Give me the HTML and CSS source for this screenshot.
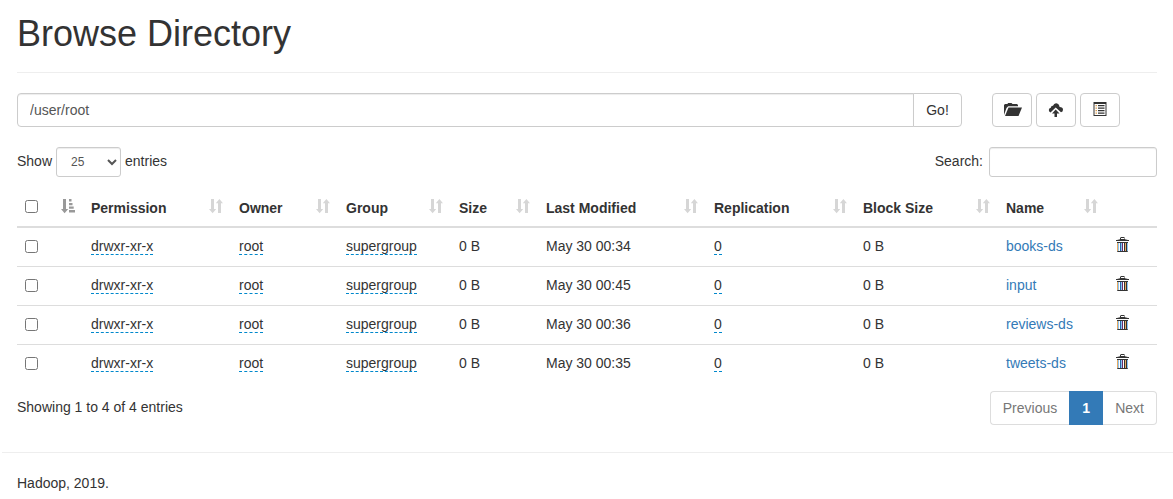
FILE: index.html
```html
<!DOCTYPE html>
<html lang="en">
<head>
<meta charset="utf-8">
<title>Browsing HDFS</title>
<link rel="stylesheet" href="styles.css">
</head>
<body>
<svg class="sprite" aria-hidden="true">
  <symbol id="sort" viewBox="0 0 14 15"><path d="M2 0h3v10h2.200l-3.600 4.300L0 10h2zM9 14V4.300H6.800L10.400 0 14 4.300h-2V14z"/></symbol>
  <symbol id="sort-asc" viewBox="0 0 14 15"><path d="M2 0h3v10h2.200l-3.600 4.300L0 10h2zM8 0h2.500v2.500H8zM8 4h3.500v2.300H8zM8 7.500h4.700v2.300H8zM8 11h6v2.500H8z"/></symbol>
  <symbol id="trash" viewBox="0 0 14 16"><path d="M1 3h1l3-.8V1l1-1h3l1 1v1.200L13 3h1v1H1zM6 1v1h3.500V1z" fill-rule="evenodd"/><path d="M2 5h11v9l-.5 1h-10L2 14z"/><path fill="#e5a860" d="M2 6h1v8H2zM10 6h1v8h-1z"/><path fill="#8cc4f0" d="M3 6h1v8H3zM6 6h1v8H6zM12 6h1v8h-1z"/><path fill="#fff" d="M4 6h1v8H4zM8 6h1v8H8z"/><path fill="#6b2c6a" d="M7 6h1v8H7z"/><path fill="#2864a0" d="M5 6h1v8H5z"/></symbol>
</svg>
<main class="container">
  <header class="page-header"><h1>Browse Directory</h1></header>
  <div class="path-row">
    <input class="control path" type="text" value="/user/root"><button class="btn go">Go!</button>
    <div class="actions">
      <button class="btn tool folder" aria-label="Create directory"><svg width="18" height="14" viewBox="0 0 18 14"><path d="M0 12V2l1-1h2.500L4 0h3.500L8.500 1H13l1 1v1.300H4.200L2.500 5z"/><path d="M4.500 4.500H18L14.500 13H1z"/></svg></button>
      <button class="btn tool" aria-label="Upload"><svg width="16" height="14" viewBox="0 0 16 14"><path d="M2.500 9.500Q.8 8.700 .8 7q0-1.800 2-2.200Q3 2.500 5 2.700 6 0 8.300.2q2.400.2 3 2.600l.3 1.200Q15 4 15 6.700q0 2-2 2.600L7.700 4.500z"/><path d="M7.700 6.500l3.800 4H9V14H6.500v-3.500H4z"/></svg></button>
      <button class="btn tool list" aria-label="Cut and paste"><svg width="14" height="14" viewBox="0 0 14 14"><path d="M.5 0h13v14H.500zM1.500 2v11h11V2z" fill-rule="evenodd"/><path d="M5 3h6.500v1.300H5zM5 5.500h6.500v1.300H5zM5 8h6.500v1.300H5zM5 10.500h6.500v1.300H5z"/><path class="bullets" d="M2.500 3H4v1.300H2.500zM2.500 5.500H4v1.300H2.500zM2.500 8H4v1.300H2.500zM2.500 10.500H4v1.300H2.500z"/></svg></button>
    </div>
  </div>
  <div class="filters">
    <label class="length"><span>Show</span> <select class="control small"><option>25</option></select> <span>entries</span></label>
    <label class="search"><span>Search:</span><input class="control small" type="search"></label>
  </div>
  <table class="listing">
    <colgroup><col class="c-check"><col class="c-perm"><col class="c-owner"><col class="c-group"><col class="c-size"><col class="c-date"><col class="c-repl"><col class="c-block"><col class="c-name"><col class="c-del"></colgroup>
    <thead><tr>
      <th><div class="head"><input type="checkbox"><svg class="sort active"><use href="#sort-asc"/></svg></div></th>
      <th><div class="head">Permission<svg class="sort"><use href="#sort"/></svg></div></th>
      <th><div class="head">Owner<svg class="sort"><use href="#sort"/></svg></div></th>
      <th><div class="head">Group<svg class="sort"><use href="#sort"/></svg></div></th>
      <th><div class="head">Size<svg class="sort"><use href="#sort"/></svg></div></th>
      <th><div class="head">Last Modified<svg class="sort"><use href="#sort"/></svg></div></th>
      <th><div class="head">Replication<svg class="sort"><use href="#sort"/></svg></div></th>
      <th><div class="head">Block Size<svg class="sort"><use href="#sort"/></svg></div></th>
      <th><div class="head">Name<svg class="sort"><use href="#sort"/></svg></div></th>
      <th></th>
    </tr></thead>
    <tbody>
      <tr><td><input type="checkbox"></td><td><span class="edit">drwxr-xr-x</span></td><td><span class="edit">root</span></td><td><span class="edit">supergroup</span></td><td>0 B</td><td>May 30 00:34</td><td><span class="edit">0</span></td><td>0 B</td><td><a href="#">books-ds</a></td><td><svg class="trash"><use href="#trash"/></svg></td></tr>
      <tr><td><input type="checkbox"></td><td><span class="edit">drwxr-xr-x</span></td><td><span class="edit">root</span></td><td><span class="edit">supergroup</span></td><td>0 B</td><td>May 30 00:45</td><td><span class="edit">0</span></td><td>0 B</td><td><a href="#">input</a></td><td><svg class="trash"><use href="#trash"/></svg></td></tr>
      <tr><td><input type="checkbox"></td><td><span class="edit">drwxr-xr-x</span></td><td><span class="edit">root</span></td><td><span class="edit">supergroup</span></td><td>0 B</td><td>May 30 00:36</td><td><span class="edit">0</span></td><td>0 B</td><td><a href="#">reviews-ds</a></td><td><svg class="trash"><use href="#trash"/></svg></td></tr>
      <tr><td><input type="checkbox"></td><td><span class="edit">drwxr-xr-x</span></td><td><span class="edit">root</span></td><td><span class="edit">supergroup</span></td><td>0 B</td><td>May 30 00:35</td><td><span class="edit">0</span></td><td>0 B</td><td><a href="#">tweets-ds</a></td><td><svg class="trash"><use href="#trash"/></svg></td></tr>
    </tbody>
  </table>
  <div class="summary">
    <div class="info">Showing 1 to 4 of 4 entries</div>
    <nav class="pager"><span class="prev">Previous</span><span class="current">1</span><span class="next">Next</span></nav>
  </div>
</main>
<footer><p>Hadoop, 2019.</p></footer>
</body>
</html>
```
FILE: styles.css
```css
* { box-sizing: border-box; }
body { margin: 0; background: #fff; color: #333; font: 14px/20px "Liberation Sans", Arial, sans-serif; overflow: hidden; }
input, select, button { font: inherit; margin: 0; }
svg { fill: #333; display: block; }
a { color: #337ab7; text-decoration: none; }
.sprite { width: 0; height: 0; display: none; }
.container { width: 1140px; margin-left: 17px; padding-top: 14px; }
.page-header { padding-bottom: 18px; margin-bottom: 20px; border-bottom: 1px solid #eee; }
h1 { margin: 0; font-size: 36px; line-height: 40px; font-weight: normal; }
.path-row { display: flex; height: 34px; }
.control { border: 1px solid #ccc; border-radius: 4px; background: #fff; color: #555; box-shadow: inset 0 1px 1px rgba(0,0,0,.075); outline: 0; }
.path { width: 897px; padding: 6px 12px; border-radius: 4px 0 0 4px; }
.btn { border: 1px solid #ccc; border-radius: 4px; background: #fff; color: #333; padding: 0; }
.go { width: 49px; margin-left: -1px; border-radius: 0 4px 4px 0; }
.actions { display: flex; gap: 4px; margin-left: 30px; }
.tool { width: 40px; display: flex; align-items: flex-start; justify-content: center; padding-top: 9px; }
.folder { padding-left: 2px; }
.list { padding-top: 8px; }
.bullets { fill: #dca052; }
.filters { display: flex; justify-content: space-between; height: 30px; margin-top: 20px; }
.length, .search { display: flex; align-items: center; gap: 4px; }
.length span, .search span { padding-bottom: 2px; }
.small { height: 30px; border-radius: 3px; font-size: 12px; padding: 5px 10px; }
select.small { width: 65px; }
.search { gap: 6px; }
.search .small { width: 168px; }
.listing { width: 1140px; table-layout: fixed; border-collapse: separate; border-spacing: 0; margin-top: 13px; }
.c-check { width: 66px; }
.c-perm { width: 148px; }
.c-owner { width: 107px; }
.c-group { width: 113px; }
.c-size { width: 87px; }
.c-date { width: 168px; }
.c-repl { width: 149px; }
.c-block { width: 143px; }
.c-name { width: 108px; }
.c-del { width: 51px; }
th { height: 38px; padding: 8px; border-bottom: 2px solid #ddd; text-align: left; }
.head { display: flex; height: 20px; justify-content: space-between; }
.sort { width: 14px; height: 15px; margin-top: 1px; fill: #d6d6d6; }
.sort.active { fill: #999; }
td { height: 39px; padding: 8px 8px 0; border-top: 1px solid #ddd; vertical-align: top; }
tbody tr:first-child td { height: 38px; border-top: 0; }
input[type="checkbox"] { display: block; width: 13px; height: 13px; margin-top: 4px; }
.head input[type="checkbox"] { margin-top: 2px; }
.edit { border-bottom: 1px dashed #08c; }
.trash { width: 14px; height: 16px; margin: 1px 0 0 1px; }
.summary { display: flex; justify-content: space-between; margin-top: 8px; height: 34px; }
.info { padding-top: 6px; }
.pager { display: flex; color: #777; }
.pager span { height: 34px; padding: 6px 12px; border: 1px solid #ddd; }
.pager .prev { border-radius: 4px 0 0 4px; border-right: 0; }
.pager .next { border-radius: 0 4px 4px 0; border-left: 0; }
.pager .current { width: 34px; text-align: center; background: #337ab7; border-color: #337ab7; color: #fff; font-weight: bold; }
footer { margin: 27px 0 0 2px; padding: 20px 15px 0; border-top: 1px solid #eee; }
footer p { margin: 0; }
```
